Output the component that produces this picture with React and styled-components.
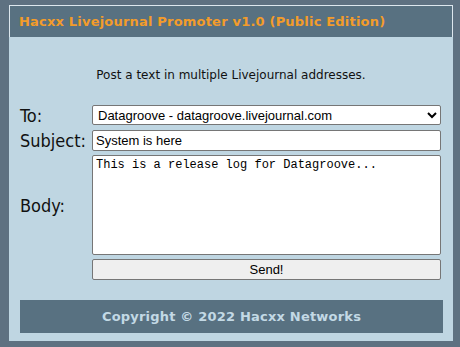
import React from 'react';
import styled, { createGlobalStyle } from 'styled-components';

const GlobalStyle = createGlobalStyle`
  body {
    margin: 0;
    background-color: #5e7181;
    font-family: "DejaVu Sans", sans-serif;
  }
`;

const Panel = styled.div`
  width: 444px;
  margin: 5px 0 0 9px;
  background-color: #bfd6e2;
  padding-bottom: 8px;
`;

const Header = styled.div`
  height: 32px;
  box-sizing: border-box;
  border: 1px solid #dde7ee;
  border-bottom: none;
  background-color: #587181;
  color: #f39c2a;
  font-weight: bold;
  font-size: 13px;
  letter-spacing: 0.2px;
  line-height: 31px;
  padding-left: 9px;
`;

const Intro = styled.p`
  margin: 31px 0 0;
  text-align: center;
  font-size: 12px;
  color: #111;
`;

const Form = styled.form`
  display: grid;
  grid-template-columns: 72px 349px;
  row-gap: 4px;
  margin: 23px 0 0 11px;
`;

const Label = styled.label`
  display: flex;
  align-items: center;
  font-family: "DejaVu Sans Condensed", "DejaVu Sans", sans-serif;
  font-size: 18px;
  color: #111;
`;

const fieldBase = `
  box-sizing: border-box;
  width: 100%;
  margin: 0;
  background: #fff;
  border: 1px solid #767676;
  border-radius: 2px;
  color: #000;
`;

const Select = styled.select`
  ${fieldBase}
  height: 20px;
  font-family: "Liberation Sans", Arial, sans-serif;
  font-size: 13px;
  padding: 0 0 0 1px;
`;

const Input = styled.input`
  ${fieldBase}
  height: 21px;
  font-family: "Liberation Sans", Arial, sans-serif;
  font-size: 13px;
  padding: 1px 3px;
`;

const TextArea = styled.textarea`
  ${fieldBase}
  height: 100px;
  resize: none;
  font-family: "Liberation Mono", monospace;
  font-size: 12px;
  padding: 2px 3px;
`;

const Button = styled.button`
  box-sizing: border-box;
  width: 100%;
  height: 21px;
  margin: 0;
  background: #efefef;
  border: 1px solid #767676;
  border-radius: 2px;
  font-family: "Liberation Sans", Arial, sans-serif;
  font-size: 13px;
  color: #000;
`;

const Footer = styled.div`
  margin: 20px 10px 0 11px;
  height: 33px;
  background-color: #587181;
  color: #c3d9e5;
  font-weight: bold;
  font-size: 13px;
  letter-spacing: 0.2px;
  line-height: 33px;
  text-align: center;
`;

const App = () => (
  <>
    <GlobalStyle />
    <Panel>
      <Header>Hacxx Livejournal Promoter v1.0 (Public Edition)</Header>
      <Intro>Post a text in multiple Livejournal addresses.</Intro>
      <Form onSubmit={(e) => e.preventDefault()}>
        <Label>To:</Label>
        <Select defaultValue="datagroove">
          <option value="datagroove">Datagroove - datagroove.livejournal.com</option>
        </Select>
        <Label>Subject:</Label>
        <Input defaultValue="System is here" />
        <Label>Body:</Label>
        <TextArea defaultValue="This is a release log for Datagroove..." />
        <span />
        <Button type="submit">Send!</Button>
      </Form>
      <Footer>Copyright © 2022 Hacxx Networks</Footer>
    </Panel>
  </>
);

export default App;
